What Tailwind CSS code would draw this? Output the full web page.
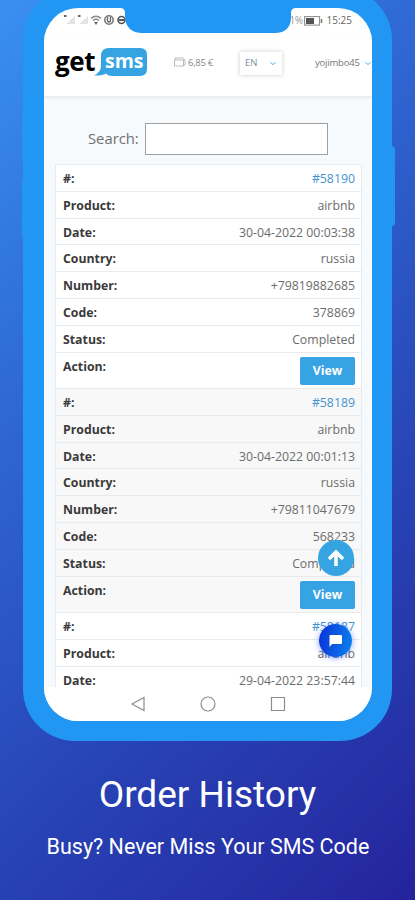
<!DOCTYPE html>
<html lang="en">
<head>
<meta charset="utf-8">
<title>Order History</title>
<script src="https://cdn.jsdelivr.net/npm/@tailwindcss/browser@4"></script>
</head>
<body class="w-[415px] h-[900px] overflow-hidden bg-[linear-gradient(137deg,#3a90f2_0%,#327ae1_18%,#2f68d4_32%,#2b55c5_50%,#2743b5_67%,#2630a6_88%,#24239c_100%)] font-['Open_Sans',sans-serif]">
<main class="relative w-[415px] h-[900px] overflow-hidden flex flex-col items-center">
  <div class="absolute left-[22px] top-[108px] w-2 h-[54px] rounded bg-[#2196f3]"></div>
  <div class="absolute left-[22px] top-[178px] w-2 h-[62px] rounded bg-[#2196f3]"></div>
  <div class="absolute left-[388px] top-[146px] w-[7px] h-[80px] rounded-sm bg-[#2196f3]"></div>
  <section class="relative -mt-3 ml-0 w-[369px] h-[753px] shrink-0 rounded-[52px] bg-[#2196f3] pt-5 px-[21px] pb-5">
    <div class="relative w-[328px] h-[713px] rounded-[34px] bg-white overflow-hidden flex flex-col">
      <!-- notch -->
      <svg class="absolute left-[76px] top-0" width="176" height="26" viewBox="0 0 176 26" fill="#2196f3"><path d="M0 0Q5 0 5 5V9Q6 24 21 25H156Q171 24 171 9V5Q171 0 176 0Z"/></svg>
      <div class="h-[25px] shrink-0 flex justify-between pl-[19px] pr-5 text-[10px] leading-[25px] text-[#666]">
        <svg width="65" height="25" viewBox="0 0 65 25" fill="none">
          <path d="M3 16L12 8V16ZM16 16L25 8V16Z" fill="#e4e4e4"/>
          <path d="M1 8h2.500M15 8h2.500" stroke="#666" stroke-width="2"/>
          <path d="M28 10.500Q33 6 38 10.500M30 12.500Q33 10 36 12.500" stroke="#888" stroke-width="1.500"/><path d="M31 14h4l-2 3z" fill="#666"/>
          <circle cx="46" cy="12" r="4.200" stroke="#777" stroke-width="1.600"/><path d="M44.500 9v4q1.500 2 3 0V9" stroke="#666" stroke-width="1.300"/>
          <circle cx="58.500" cy="12" r="3.500" stroke="#555" stroke-width="1.600"/><path d="M56 12h5" stroke="#555" stroke-width="2"/>
        </svg>
        <div class="flex items-center"><span class="text-[#999] tracking-[-.5px]">1%</span>
          <svg class="ml-[1px] mr-1" width="19" height="10" viewBox="0 0 19 10"><rect x=".6" y=".6" width="15" height="8.500" fill="#fff" stroke="#888"/><rect x="2" y="2" width="8" height="6" fill="#555"/><path d="M17.500 3v4" stroke="#777" stroke-width="1.500"/></svg>
          <span>15:25</span></div>
      </div>
      <header class="h-[64px] shrink-0 flex items-center pl-[11px] border-b border-[#eceff0] bg-white pb-[5px] shadow-[0_1px_3px_#0001] z-10">
        <span class="text-[26px] font-bold text-black leading-[30px] w-[42px] tracking-[-.4px] -mt-[3px]">get</span>
        <div class="relative w-[51px] h-[28px]">
          <svg class="absolute inset-0 overflow-visible" width="51" height="28" viewBox="0 0 51 28" fill="#36a4e3"><path d="M12 0H43Q50 0 50 7V21Q50 28 43 28H15Q11 28 9 25.500Q5 28-3 27.500Q4 24 4 18V8Q4 0 12 0Z" /></svg>
          <span class="relative block pl-[8px] text-[19.500px] leading-[25px] font-bold text-white">sms</span>
        </div>
        <svg class="ml-[26px]" width="12" height="10" viewBox="0 0 12 10" fill="none" stroke="#aaa" stroke-width=".8"><path d="M.5 3h9v6h-9zM1 3V1h8l2 2v5h-1.500"/></svg>
        <span class="ml-[2px] w-[28px] whitespace-nowrap text-[9.500px] tracking-[-.3px] text-[#888] pt-[2px]">6,85 €</span>
        <div class="ml-[24px] mt-[2px] w-[42px] h-[23px] bg-white shadow-[0_0_5px_#0003] flex items-center pl-[5px] text-[9.500px] text-[#7894a0]">EN
          <svg class="ml-[13px]" width="6" height="5" viewBox="0 0 6 5" fill="none" stroke="#4eaee0"><path d="M.5 1.500L3 3.500L5.500 1.500"/></svg></div>
        <span class="ml-[33px] w-[45px] text-[9.500px] tracking-[-.2px] text-[#777] whitespace-nowrap pt-[2px]">yojimbo45</span>
        <svg class="ml-[5px] mt-[2px]" width="6" height="5" viewBox="0 0 6 5" fill="none" stroke="#4eaee0"><path d="M.5 1.500L3 3.500L5.500 1.500"/></svg>
      </header>
      <div class="h-[590px] shrink-0 overflow-hidden bg-[#f6fafd] px-[11px]">
        <div class="h-[67px] flex items-center pt-[16px] pl-[33px] text-[14.800px] text-[#707070]">
          <label class="w-[57px]">Search:</label><div class="w-[183px] h-[32px] bg-white border border-[#a0a0a0]"></div>
        </div>
        <div id="orders" class="w-[307px] bg-white border border-[#e8ebed] text-[12.300px] text-[#6c6c6c]"></div>
      </div>
      <nav class="h-[34px] shrink-0 bg-white flex justify-center">
        <svg width="328" height="34" viewBox="0 0 328 34" fill="none" stroke="#8c8c8c" stroke-width="1.200"><path d="M88 17L100 10.500V23.500Z"/><circle cx="164" cy="17" r="7"/><path d="M227.500 10.500h13v13h-13z"/></svg>
      </nav>
      <div class="absolute left-[274px] top-[532px] size-[36px] rounded-full bg-[#36a4e3] flex items-center justify-center">
        <svg width="18" height="18" viewBox="0 0 18 18" fill="none" stroke="#fff" stroke-width="3.500"><path d="M9 17V3M2 10L9 3L16 10"/></svg></div>
      <div class="absolute left-[275px] top-[616px] size-[33px] rounded-full bg-[linear-gradient(100deg,#0a30d8,#0b84ed)] shadow-[0_1px_6px_#2050ff80] flex items-center justify-center">
        <svg width="13" height="12" viewBox="0 0 13 12" fill="#fff"><path d="M1 0H12Q13 0 13 1V8Q13 9 12 9H3L.5 12V1Q.5 0 1 0Z"/></svg></div>
    </div>
  </section>
  <h1 class="mt-[30px] font-[Roboto] text-[37px] leading-[48px] text-white whitespace-nowrap">Order History</h1>
  <p class="mt-[15px] pl-px font-[Roboto] text-[21.500px] leading-[26px] text-white whitespace-nowrap">Busy? Never Miss Your SMS Code</p>
</main>
<template id="row"><div class="flex justify-between h-[26.800px] pl-[7px] pr-[6px] leading-[28px] border-b border-[#e8eaeb]"><b class="font-bold text-[#3a3a3a]"></b><span class="text-right"></span></div></template>
<template id="action"><div class="flex justify-between h-[36.400px] pl-[7px] pr-[6px] leading-[28px] border-b border-[#e8eaeb]"><b class="font-bold text-[#3a3a3a]">Action:</b><span class="mt-[4.500px] w-[55px] h-[28px] rounded-[2px] bg-[#36a4e3] text-white font-bold text-center leading-[28px]">View</span></div></template>
<script>
const keys = ['#','Product','Date','Country','Number','Code','Status'];
const orders = [
  ['#58190','airbnb','30-04-2022 00:03:38','russia','+79819882685','378869','Completed'],
  ['#58189','airbnb','30-04-2022 00:01:13','russia','+79811047679','568233','Completed'],
  ['#58187','airbnb','29-04-2022 23:57:44']
];
orders.forEach((o, i) => {
  const g = document.createElement('div');
  if (i % 2) g.className = 'bg-[#f8f8f8]';
  o.forEach((v, k) => {
    const r = document.getElementById('row').content.cloneNode(true);
    r.querySelector('b').textContent = keys[k] + ':';
    r.querySelector('span').textContent = v;
    if (!k) r.querySelector('span').className = 'text-[#4593cf]';
    g.append(r);
  });
  if (o.length > 3) g.append(document.getElementById('action').content.cloneNode(true));
  document.getElementById('orders').append(g);
});
</script>
</body>
</html>
